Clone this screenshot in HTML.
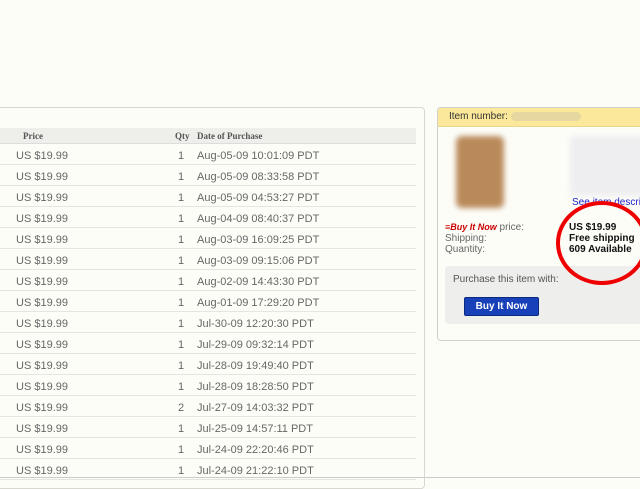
<!DOCTYPE html>
<html><head><style>
body{margin:0;width:640px;height:480px;background:#fdfdf8;position:relative;overflow:hidden;font-family:"Liberation Sans",sans-serif;}
.lp{position:absolute;left:-10px;top:107px;width:433px;height:380px;border:1px solid #d8d8d0;border-radius:4px;background:#fdfdf8;}
.hd{position:absolute;left:0;top:128px;width:416px;height:15px;background:#eeeeea;border-bottom:1px solid #ddd;font:bold 9px "Liberation Serif",serif;color:#555;}
.row{position:absolute;left:0;width:416px;height:20px;border-bottom:1px solid #e6e6e0;font-size:11px;color:#666;}
.row span{position:absolute;top:6px}
.rp{position:absolute;left:437px;top:107px;width:210px;height:232px;border:1px solid #d0d0c8;border-radius:4px;background:#fdfdf8;overflow:hidden}
</style></head><body>
<div class="lp"></div>
<div class="hd"><span style="position:absolute;left:23px;top:3px">Price</span><span style="position:absolute;left:175px;top:3px">Qty</span><span style="position:absolute;left:197px;top:3px">Date of Purchase</span></div>
<div id="rows"></div>
<div class="rp">
 <div style="height:19px;background:#fbe89a;border-bottom:1px solid #e8d68a;font-size:10px;color:#333;padding:3px 0 0 11px;box-sizing:border-box">Item number: <span style="display:inline-block;width:70px;height:9px;background:#e6d7a0;border-radius:5px;vertical-align:middle"></span></div>
 <div style="position:absolute;left:18px;top:28px;width:48px;height:72px;background:#b9895a;border-radius:6px;filter:blur(3px)"></div>
 <div style="position:absolute;left:132px;top:28px;width:80px;height:60px;background:#eeeef0;filter:blur(3px)"></div>
 <div style="position:absolute;left:134px;top:89px;font-size:10px;color:#22c">See item descri</div>
 <div style="position:absolute;left:7px;top:114px;font-size:10px;color:#666;line-height:11px"><i style="color:#c00;font-weight:bold;font-size:9px">≡Buy It Now</i> price:<br>Shipping:<br>Quantity:</div>
 <div style="position:absolute;left:131px;top:114px;font-size:10px;color:#111;font-weight:bold;line-height:11px">US $19.99<br>Free shipping<br>609 Available</div>
 <div style="position:absolute;left:7px;top:158px;width:210px;height:58px;background:#eeeeec;border-radius:3px"></div>
 <div style="position:absolute;left:15px;top:166px;font-size:10px;color:#555">Purchase this item with:</div>
 <div style="position:absolute;left:26px;top:189px;width:73px;height:17px;background:#1840b8;border:1px solid #0a2a80;color:#fff;font-size:10px;font-weight:bold;text-align:center;line-height:17px;border-radius:2px">Buy It Now</div>
 <div style="position:absolute;left:118px;top:93px;width:92px;height:84px;border:4px solid #e00;border-radius:50%;box-sizing:border-box;z-index:5"></div>
</div>
<div style="position:absolute;left:0;top:477px;width:640px;height:1px;background:#ccc"></div>
<script>
var d=["Aug-05-09 10:01:09","Aug-05-09 08:33:58","Aug-05-09 04:53:27","Aug-04-09 08:40:37","Aug-03-09 16:09:25","Aug-03-09 09:15:06","Aug-02-09 14:43:30","Aug-01-09 17:29:20","Jul-30-09 12:20:30","Jul-29-09 09:32:14","Jul-28-09 19:49:40","Jul-28-09 18:28:50","Jul-27-09 14:03:32","Jul-25-09 14:57:11","Jul-24-09 22:20:46","Jul-24-09 21:22:10"];
var h="";d.forEach(function(x,i){h+='<div class="row" style="top:'+(144+21*i)+'px"><span style="left:16px">US $19.99</span><span style="left:178px">'+(i==12?2:1)+'</span><span style="left:197px">'+x+' PDT</span></div>';});
document.getElementById("rows").innerHTML=h;
</script>
</body></html>
